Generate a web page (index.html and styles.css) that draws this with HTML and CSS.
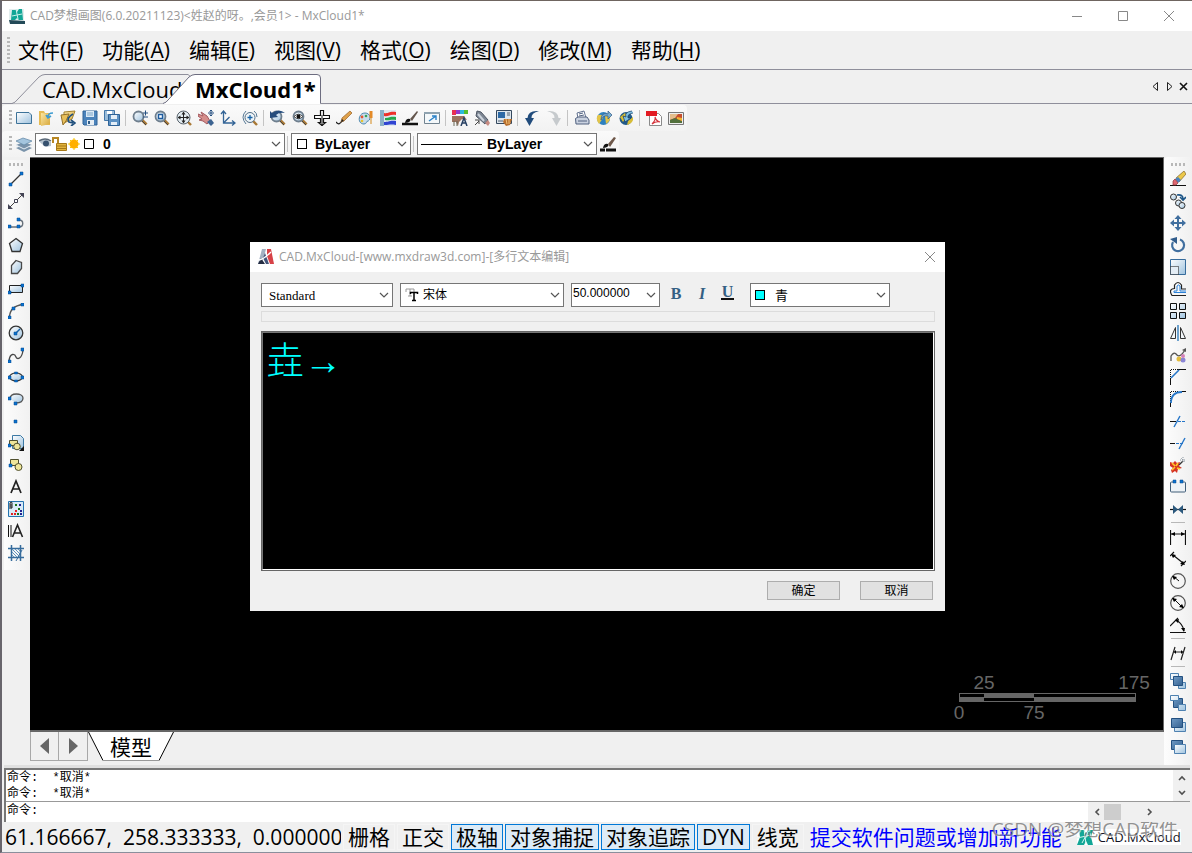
FILE: index.html
```html
<!DOCTYPE html>
<html lang="zh-CN">
<head>
<meta charset="utf-8">
<title>CAD梦想画图 - MxCloud1</title>
<link rel="stylesheet" href="styles.css">
</head>
<body>
<svg class="defs" aria-hidden="true">
  <defs>
    <linearGradient id="glass" x1="0" y1="0" x2="1" y2="1"><stop offset="0" stop-color="#fff"/><stop offset="1" stop-color="#9fc3df"/></linearGradient>
    <linearGradient id="steel" x1="0" y1="0" x2="1" y2="1"><stop offset="0" stop-color="#6f9bc6"/><stop offset="1" stop-color="#34608f"/></linearGradient>
    <linearGradient id="gold" x1="0" y1="0" x2="1" y2="1"><stop offset="0" stop-color="#fbe6a2"/><stop offset="1" stop-color="#d6a63a"/></linearGradient>
    <symbol id="lens" viewBox="0 0 16 16"><path d="M10 10l4.500 4.500" stroke="#a87834" stroke-width="2.800"/><path d="M10 11l4 4" stroke="#444"/><circle cx="6.500" cy="6.500" r="5" fill="url(#glass)" stroke="#6f7f8e" stroke-width="1.800"/></symbol>
    <symbol id="mx" viewBox="0 0 16 16"><path d="M2 1h5l2 4 2-4h5l-2 7 2 8h-5l-2-4-2 4H0l3-8z" fill="#12a696"/><path d="M7 0l2 15M0 9l14-3M12 1L5 14" stroke="#d6f6f2"/></symbol>
    <symbol id="chev" viewBox="0 0 10 6"><path d="M1 1l4 4 4-4" fill="none" stroke="#555" stroke-width="1.200"/></symbol>
  </defs>
</svg>

<header class="titlebar">
  <svg class="app-logo" viewBox="0 0 16 16"><path d="M0 1h15v13H0z" fill="#e3eeee"/><path d="M0 12l16 1v3H1z" fill="#244a58"/><path d="M3 2h4l1 2 2-3h3l1 11h-4L8 10l-2 2H2z" fill="#12a696"/><path d="M7 1l2 10M3 8l10-2" stroke="#c9f0ea"/></svg>
  <h1 class="title">CAD梦想画图(6.0.20211123)&lt;姓赵的呀。,会员1&gt; - MxCloud1*</h1>
  <div class="window-controls">
    <button aria-label="最小化"><svg viewBox="0 0 12 12"><path d="M1 6.500h10"/></svg></button>
    <button aria-label="最大化"><svg viewBox="0 0 12 12"><path d="M1.500 1.500h9v9h-9z"/></svg></button>
    <button aria-label="关闭"><svg viewBox="0 0 12 12"><path d="M1 1l10 10M11 1L1 11"/></svg></button>
  </div>
</header>

<nav class="menubar">
  <span class="grip grip-tall"></span>
  <button>文件(<u>F</u>)</button>
  <button>功能(<u>A</u>)</button>
  <button>编辑(<u>E</u>)</button>
  <button>视图(<u>V</u>)</button>
  <button>格式(<u>O</u>)</button>
  <button>绘图(<u>D</u>)</button>
  <button>修改(<u>M</u>)</button>
  <button>帮助(<u>H</u>)</button>
</nav>

<div class="doc-tabs">
  <button class="doc-tab tab-back"><svg class="tab-shape" viewBox="0 0 180 30" preserveAspectRatio="none"><path d="M0 29.500Q3 29 6 25L27 3Q30 .500 33 .500H176L180 4V29.500" fill="#f0f0f0" stroke="#8f8f9b"/></svg><span>CAD.MxCloud</span></button>
  <button class="doc-tab tab-front"><svg class="tab-shape" viewBox="0 0 158 30" preserveAspectRatio="none"><path d="M0 29.500Q3 29 6 25L26 3Q29 .500 32 .500H154Q157.500 .500 157.500 4V30H0" fill="#fff"/><path d="M0 29.500Q3 29 6 25L26 3Q29 .500 32 .500H154Q157.500 .500 157.500 4V29.500" fill="none" stroke="#6d6d80"/></svg><span>MxCloud1*</span></button>
  <div class="tab-nav">
    <button aria-label="上一个"><svg viewBox="0 0 9 11"><path d="M6.500 1.500v8L2 5.500z" fill="none" stroke="#222"/></svg></button>
    <button aria-label="下一个"><svg viewBox="0 0 9 11"><path d="M2.500 1.500v8L7 5.500z" fill="none" stroke="#222"/></svg></button>
    <button aria-label="关闭标签"><svg viewBox="0 0 9 11"><path d="M1 2l7 7M8 2L1 9" stroke="#111" stroke-width="1.600"/></svg></button>
  </div>
</div>

<div class="toolbar">
  <span class="grip"></span>
  <button class="tool" title="新建"><svg viewBox="0 0 16 16"><path d="M.500 2.500H13L15.500 5v8.500H.500z" fill="url(#glass)" stroke="#3d7399"/></svg></button>
  <button class="tool" title="打开"><svg viewBox="0 0 16 16"><path d="M1 1h5l1 2h5v12H1z" fill="#e5bb53"/><path d="M3 3l9 1v10l-9 2z" fill="url(#gold)"/><path d="M15 3c-4 0-5 1-5 4M8 5l2 3 3-2" fill="none" stroke="#3d9bd0" stroke-width="1.600"/></svg></button>
  <button class="tool" title="打开云图"><svg viewBox="0 0 16 16"><path d="M4 2l11-1-3 8-8 4z" fill="url(#gold)" stroke="#a4822e"/><path d="M1 5l8-1-3 7-3 4z" fill="#e8bf59" stroke="#92702a"/><path d="M13 4Q6 8 9 12l4 1M11 10l4 3-4 3" fill="none" stroke="#21517e" stroke-width="1.700"/></svg></button>
  <button class="tool" title="保存"><svg viewBox="0 0 16 16"><path d="M1 1h14v14H2L1 14z" fill="#4b83bb" stroke="#2e6297"/><path d="M4 1h8v6H4z" fill="#dceaf5"/><path d="M5 3h6M5 5h6" stroke="#7ba5c9"/><path d="M5 10h7v5H5z" fill="#e5edf4"/><path d="M6 11h2v3H6z" fill="#335e88"/></svg></button>
  <button class="tool" title="另存为"><svg viewBox="0 0 16 16"><path d="M.500 .500h10v10h-10z" fill="#9bbdda" stroke="#4276a8"/><path d="M3 1h5v3H3z" fill="#fff"/><path d="M4.500 4.500h11v11h-11z" fill="#5c91c3" stroke="#2e6297"/><path d="M7 5h6v4H7zM7 12h6v3H7z" fill="#e4eef7"/></svg></button>
  <span class="sep"></span>
  <button class="tool" title="缩放"><svg viewBox="0 0 16 16"><use href="#lens"/><path d="M11 3h5M13.500 .500v5M11 7h5" stroke="#244f80"/></svg></button>
  <button class="tool" title="窗口缩放"><svg viewBox="0 0 16 16"><use href="#lens"/><path d="M4.500 4.500h4v4h-4z" fill="#fff" stroke="#1d5b9e" stroke-width="1.400"/></svg></button>
  <button class="tool" title="范围缩放"><svg viewBox="0 0 16 16"><path d="M11 11l4 4" stroke="#a87834" stroke-width="2.400"/><circle cx="7.500" cy="7.500" r="6.500" fill="#e4edf2" stroke="#59636c"/><path d="M3 7.500h9M7.500 3v9" stroke="#222"/><path d="M1.500 7.500l3-2v4zM13.500 7.500l-3-2v4zM7.500 1.500l-2 3h4zM7.500 13.500l-2-3h4z" fill="#222"/></svg></button>
  <button class="tool" title="平移"><svg viewBox="0 0 16 16"><path d="M0 4l5 2-2-4 6 4 3 5-3 3-4-3-4-1 3-1-4-3z" fill="#d58d8b" stroke="#a35b60"/><path d="M9 12l4-3 3 4-3 3z" fill="#3c6390"/><path d="M10 3h6M13 0v6" stroke="#244f80"/><path d="M11.500 1.500L13 0l1.500 1.500M11.500 4.500L13 6l1.500-1.500" fill="none" stroke="#244f80"/></svg></button>
  <button class="tool" title="坐标系"><svg viewBox="0 0 16 16"><path d="M3.500 1v12H15M3.500 13l6-6M1 4l2.500-3L6 4M12 10.500l3 2.500-3 2.500" fill="none" stroke="#336496" stroke-width="1.300"/></svg></button>
  <button class="tool" title="实时缩放"><svg viewBox="0 0 16 16"><path d="M11 11l4 4" stroke="#a87834" stroke-width="2.400"/><circle cx="8" cy="7.500" r="5" fill="#edf4f8" stroke="#516c84"/><path d="M5.500 7.500h5M8 5v5" stroke="#1763a8" stroke-width="1.300"/><path d="M4 1Q-2 7 4 14M12 1q3 2 3 6" fill="none" stroke="#557895"/></svg></button>
  <span class="sep"></span>
  <button class="tool" title="上一视图"><svg viewBox="0 0 16 16"><use href="#lens"/><path d="M0 8V1l2 2q7-5 13 0-6-1-9 2l2 2z" fill="#244c7d"/></svg></button>
  <button class="tool" title="查看"><svg viewBox="0 0 16 16"><use href="#lens"/><path d="M2 6.500Q6.500 2 11 6.500 6.500 11 2 6.500z" fill="#fff" stroke="#444"/><circle cx="6.500" cy="6.500" r="2" fill="#111"/></svg></button>
  <button class="tool" title="定位"><svg viewBox="0 0 16 16"><path d="M6.500 .500h3v5h6v3h-6v4h2L8 15.500l-3.500-3h2v-4h-6v-3h6z" fill="#fff" stroke="#111" stroke-width="1.200"/><path d="M8 5v11" stroke="#111"/></svg></button>
  <button class="tool" title="画笔"><svg viewBox="0 0 16 16"><path d="M0 12q3 4 6-1" fill="none" stroke="#222" stroke-width="1.300"/><path d="M5 12l1-4 8-7 2 2-8 8z" fill="#dfa14b" stroke="#986025" stroke-width=".700"/><path d="M5 12l1-3 2 2z" fill="#222"/></svg></button>
  <button class="tool" title="调色板"><svg viewBox="0 0 16 16"><path d="M7 3C0 3-1 14 6 14c3 0 2-3 4-3 3-1 3-8-3-8z" fill="#c8dceb" stroke="#4c88ae"/><circle cx="4" cy="7" r="1.400" fill="#e65533"/><circle cx="8" cy="6" r="1.300" fill="#35a458"/><circle cx="4" cy="11" r="1.300" fill="#e6c22e"/><path d="M13 1v7" stroke="#e48b28" stroke-width="3"/><path d="M13 8v6" stroke="#e0b26d" stroke-width="1.600"/></svg></button>
  <button class="tool" title="颜色"><svg viewBox="0 0 16 16"><path d="M0 0h16v16H0z" fill="#dfe8ef"/><path d="M16 2c-8-1-7 2-12 1v3c5 1 5-2 12-1z" fill="#ed302a"/><path d="M16 7c-7-1-7 1-11 1v2c5 1 5-1 11 0z" fill="#25a64b"/><path d="M16 11c-7-1-7 1-12 1v3c6 0 6-1 12 0z" fill="#3044d2"/><path d="M0 0h4v16H0z" fill="#8aafc8"/></svg></button>
  <button class="tool" title="线型刷"><svg viewBox="0 0 16 16"><path d="M0 14h16" stroke="#111" stroke-width="2.500"/><path d="M3 13q1-5 5-4 2 3-5 4" fill="#111"/><path d="M8 9l7-8 1 1-6 9z" fill="#64564d"/></svg></button>
  <button class="tool" title="全屏"><svg viewBox="0 0 16 16"><path d="M.500 2.500h15v11H.500z" fill="#f4f8fa" stroke="#718390"/><path d="M0 2h16v2H0z" fill="#8fa3b0"/><path d="M5 11l7-5M8 6h4v4" fill="none" stroke="#2c82c8" stroke-width="1.400"/></svg></button>
  <span class="sep"></span>
  <button class="tool" title="文字样式"><svg viewBox="0 0 16 16"><path d="M0 0h4v5H0z" fill="#e92d52"/><path d="M4 0h4v4H4z" fill="#9437cb"/><path d="M8 0h4v4H8z" fill="#2db8db"/><path d="M12 0h4v4h-4z" fill="#56bf2c"/><path d="M0 6h12l3 4-5-1-3 3-1 4-2-4H0z" fill="#9c725e"/><path d="M2 16v-5M5 16v-5" stroke="#665"/><path d="M9 16l3-8 3 8M10 13h4" fill="none" stroke="#263f62" stroke-width="1.500"/></svg></button>
  <button class="tool" title="特性匹配"><svg viewBox="0 0 16 16"><path d="M3 1l4 1 7 8-3 4-9-8z" fill="#7d8794" stroke="#4e5663"/><path d="M4 4l6 7" stroke="#ccd3dc" stroke-width="2"/><path d="M11 13l3-3 2 3-2 3z" fill="#c68a81"/><path d="M1 15l4-4M1 10h4v4" fill="none" stroke="#444"/></svg></button>
  <button class="tool" title="块编辑"><svg viewBox="0 0 16 16"><path d="M.500 .500h15v13H.500z" fill="#dde5ec" stroke="#34485e"/><path d="M2 2h7v6H2z" fill="#2d69a5"/><path d="M11 3h3M11 5h3M2 11h5" stroke="#536170"/><path d="M8 9h8l-2 6-4 1-3-4z" fill="#b8702f"/><path d="M10 9l1 5M13 9v5" stroke="#f1bf75"/></svg></button>
  <span class="sep"></span>
  <button class="tool" title="撤销"><svg viewBox="0 0 16 16"><path d="M15 1Q4 0 3.500 8H1l4.500 8L10 8H7.500Q7 3 15 1z" fill="#214c7c"/></svg></button>
  <button class="tool" title="重做"><svg viewBox="0 0 16 16"><path d="M1 1q11-1 11.500 7H15l-4.500 8L6 8h2.500Q9 3 1 1z" fill="#c6cacd"/></svg></button>
  <span class="sep"></span>
  <button class="tool" title="打印"><svg viewBox="0 0 16 16"><path d="M4 8L3 3l7-2 2 7" fill="#fff" stroke="#60708e"/><path d="M1.500 8.500L4 7h9l2 3v4H2z" fill="#c9d1df" stroke="#50617f"/><path d="M4 11h9M5 4l4-1M5 6l5-1" stroke="#50617f"/></svg></button>
  <button class="tool" title="网络图纸"><svg viewBox="0 0 16 16"><circle cx="7.500" cy="8.500" r="6.500" fill="#2d81c0"/><path d="M2 5q6-1 5 3l-4 6Q-1 9 2 5zM9 6l5 0q1 5-4 8z" fill="#e4c548"/><path d="M5 10Q5 2 12 4l0-3 4 4-4 4V6Q7 5 5 10" fill="#79add0" stroke="#315985" stroke-width=".700"/></svg></button>
  <button class="tool" title="网络更新"><svg viewBox="0 0 16 16"><circle cx="8" cy="8.500" r="6.500" fill="#225a88"/><path d="M2 7l5-4 2 3-4 6zM10 11l5-4q1 6-6 8z" fill="#d8bd36"/><path d="M14 1Q6 2 8 7L5 6l2 6 6-4-3 0Q9 4 15 3" fill="#7fc0e1" stroke="#153a64" stroke-width=".700"/></svg></button>
  <span class="sep"></span>
  <button class="tool" title="导出 PDF"><svg viewBox="0 0 16 16"><path d="M3.500 3.500h9l3 3v9h-12z" fill="#fff" stroke="#8a8a8a"/><path d="M0 1h11v5H0z" fill="#e31b23"/><path d="M6 14q4-4 3-7 1 4 5 5-4-1-8 2" fill="none" stroke="#d4333b" stroke-width="1.200"/></svg></button>
  <button class="tool" title="导出图片"><svg viewBox="0 0 16 16"><path d="M.500 2.500h15v12H.500z" fill="#eee" stroke="#777"/><path d="M2 4h12v9H2z" fill="#c64f2f"/><path d="M2 4h8l-3 4-5 2z" fill="#e4bd8b"/><path d="M2 10l5-2 7 3v2H2z" fill="#52703c"/><path d="M9 7l5 1v3l-5-2z" fill="#f2b531"/></svg></button>
</div>

<div class="toolbar">
  <span class="grip"></span>
  <button class="tool" title="图层管理"><svg viewBox="0 0 16 16"><path d="M0 12l8-3 8 3-8 4zM0 9l8-3 8 3-8 4z" fill="#7a93aa"/><path d="M0 9l8 4 8-4" fill="none" stroke="#e6eef4"/><path d="M0 5l7-3 9 3-8 4z" fill="#a4c5de" stroke="#5f84a3" stroke-width=".700"/></svg></button>
  <label class="combo combo-layer">
    <svg class="layer-state" viewBox="0 0 58 16">
      <path d="M0 5q6-4 12 1v4Q5 12 0 5z" fill="#b6c3ce"/><circle cx="7" cy="7.500" r="3" fill="#36516e"/><path d="M0 5q6-4 12 0" fill="none" stroke="#596877" stroke-width="1.500"/>
      <path d="M14 7V2h5v5" fill="none" stroke="#b78724" stroke-width="2"/><path d="M17.500 7.500h10v7h-10z" fill="#e2b43d" stroke="#a77918"/><path d="M18 10h10M18 12.500h10" stroke="#a77918"/>
      <path d="M35 2v12M29 8h12M31 4l8 8M39 4l-8 8" stroke="#f4d000"/><circle cx="35" cy="8" r="4.500" fill="#ffb000"/>
      <path d="M45.500 3.500h9v9h-9z" fill="#fff" stroke="#000"/>
    </svg>
    <select aria-label="图层"><option>0</option></select>
    <svg class="chev"><use href="#chev"/></svg>
  </label>
  <span class="sep"></span>
  <label class="combo combo-color">
    <span class="swatch"></span>
    <select aria-label="颜色"><option>ByLayer</option></select>
    <svg class="chev"><use href="#chev"/></svg>
  </label>
  <span class="sep"></span>
  <label class="combo combo-line">
    <span class="line-sample"></span>
    <select aria-label="线型"><option>ByLayer</option></select>
    <svg class="chev"><use href="#chev"/></svg>
  </label>
  <button class="tool" title="线型管理"><svg viewBox="0 0 16 16"><path d="M0 14h5M6 14h10" stroke="#111" stroke-width="3"/><path d="M3 12q1-5 5-4 2 3-5 4" fill="#111"/><path d="M8 8l6-7 2 1-6 9z" fill="#6d5749"/></svg></button>
</div>

<main class="workspace">
  <aside class="side side-left">
    <span class="grip-row"></span>
    <button class="tool" title="直线"><svg viewBox="0 0 16 16"><path d="M2 14L14 2" stroke="#333" stroke-width="1.300"/><path class="node" d="M1 12h3v3H1zM12 1h3v3h-3z"/></svg></button>
    <button class="tool" title="构造线"><svg viewBox="0 0 16 16"><path d="M1 15L15 1" stroke="#444"/><path d="M0 16v-5l5 5zM16 0v5l-5-5z" fill="#444455"/><path d="M6.500 6.500h3v3h-3z" fill="#fff" stroke="#445"/></svg></button>
    <button class="tool" title="多段线"><svg viewBox="0 0 16 16"><path d="M1 12h10c5 0 5-7 0-7" fill="none" stroke="#68717b" stroke-width="1.400"/><path class="node" d="M0 10h3v3H0zM9 10h3v3H9zM9 3h3v3H9z"/></svg></button>
    <button class="tool" title="正多边形"><svg viewBox="0 0 16 16"><path d="M8 1.500l6.500 5-2.500 8H4l-2.500-8z" fill="url(#glass)" stroke="#333" stroke-width="1.300"/></svg></button>
    <button class="tool" title="多边形"><svg viewBox="0 0 16 16"><path d="M8 1.500l5.500 2v6l-4 5h-6v-8z" fill="url(#glass)" stroke="#484848" stroke-width="1.300"/></svg></button>
    <button class="tool" title="矩形"><svg viewBox="0 0 16 16"><path d="M1.500 4.500h13v7h-13z" fill="url(#glass)" stroke="#222"/><path class="node" d="M0 10h3v3H0zM13 3h3v3h-3z"/></svg></button>
    <button class="tool" title="圆弧"><svg viewBox="0 0 16 16"><path d="M1.500 14Q2 3 15 1.500" fill="none" stroke="#555" stroke-width="1.300"/><path class="node" d="M0 13h3v3H0zM4 4h3v3H4zM13 0h3v3h-3z"/></svg></button>
    <button class="tool" title="圆"><svg viewBox="0 0 16 16"><circle cx="8" cy="8" r="6.800" fill="url(#glass)" stroke="#333" stroke-width="1.300"/><path d="M8 8l4-4" stroke="#1763a8" stroke-width="1.400"/><path class="node" d="M6 7h3v3H6z"/></svg></button>
    <button class="tool" title="样条曲线"><svg viewBox="0 0 16 16"><path d="M1 14C2 5 7 7 8 10s6 2 7-7" fill="none" stroke="#474747" stroke-width="1.300"/><path class="node" d="M0 13h3v3H0zM13 1h3v3h-3z"/></svg></button>
    <button class="tool" title="椭圆"><svg viewBox="0 0 16 16"><ellipse cx="8" cy="8" rx="6.500" ry="4" fill="url(#glass)" stroke="#333" stroke-width="1.200"/><path class="node" d="M0 7h3v3H0zM13 7h3v3h-3zM6.500 3h3v2h-3zM6.500 11h3v2h-3z"/></svg></button>
    <button class="tool" title="椭圆弧"><svg viewBox="0 0 16 16"><path d="M2 8C2 1 15 2 15 7q0 5-7 5" fill="url(#glass)" stroke="#555" stroke-width="1.300"/><path class="node" d="M0 6h3v3H0zM6 11h3v3H6z"/></svg></button>
    <button class="tool" title="点"><svg viewBox="0 0 16 16"><path class="node" d="M6 7h3v3H6z"/></svg></button>
    <button class="tool" title="插入块"><svg viewBox="0 0 16 16"><path d="M4.500 .500h8l3 3v10h-11z" fill="url(#glass)" stroke="#3c79a5"/><path d="M1.500 5.500h8v5h-8z" fill="#efe69a" stroke="#50502e"/><circle cx="9" cy="11.500" r="3.300" fill="#efe69a" stroke="#50502e"/><path d="M16 11v5h-5z" fill="#111"/><path class="node" d="M0 9h3v3H0z"/></svg></button>
    <button class="tool" title="创建块"><svg viewBox="0 0 16 16"><path d="M2.500 2.500h8v6h-8z" fill="#efe69a" stroke="#50502e"/><circle cx="10.500" cy="10" r="3.500" fill="#efe69a" stroke="#50502e"/><path class="node" d="M1 7h3v3H1z"/></svg></button>
    <button class="tool" title="文字"><svg viewBox="0 0 16 16"><path d="M3 14L8 2l5 12M5 10h6" fill="none" stroke="#222" stroke-width="1.700"/></svg></button>
    <button class="tool" title="填充"><svg viewBox="0 0 16 16"><path d="M.500 .500h15v15H.500z" fill="#d8eaf7" stroke="#2474b0"/><path d="M2 8V2q2-2 2 0v5q-1 1-1-1V3" fill="none" stroke="#222"/><path d="M3 12h2v2H3zM6 12h2v2H6zM7 9h2v2H7z" fill="#e12222"/><path d="M7 3h2v2H7zM10 7h2v2h-2zM9 12h2v2H9z" fill="#197519"/><path d="M11 3h2v2h-2zM12 9h2v2h-2zM12 12h2v2h-2z" fill="#20208f"/></svg></button>
    <button class="tool" title="多行文字"><svg viewBox="0 0 16 16"><path d="M.500 2v12M3 2v12" stroke="#111"/><path d="M4.500 14L9.500 2l5 12M6.500 10h6" fill="none" stroke="#222" stroke-width="1.600"/></svg></button>
    <button class="tool" title="图案填充"><svg viewBox="0 0 16 16"><path d="M3.500 0v16M12.500 0v16M0 3.500h16M0 12.500h16" stroke="#376c9c" stroke-width="1.500"/><path d="M4 4l8 8M4 7l5 5M7 4l5 5M4 10l2 2M10 4l2 2" stroke="#6093bd"/><path d="M14 5l-6 11" stroke="#376c9c"/></svg></button>
  </aside>

  <section class="center">
    <div class="canvas">
      <svg class="scale" viewBox="0 0 204 50" role="img" aria-label="比例尺">
        <g fill="#666"><path d="M5 21h177v9H5z"/><path d="M6 22h24v3H6zM30 26h50v3H30zM80 22h101v3H80z" fill="#000"/>
        <text x="30" y="17" text-anchor="middle">25</text><text x="180" y="17" text-anchor="middle">175</text><text x="5" y="47" text-anchor="middle">0</text><text x="80" y="47" text-anchor="middle">75</text></g>
      </svg>

      <section class="dialog" role="dialog" aria-label="多行文本编辑">
        <header class="dialog-head">
          <svg class="dialog-logo" viewBox="0 0 16 16"><path d="M4 0h4l-2 8-3 7H0z" fill="#a3b1c2"/><path d="M0 15l3-6 4 6z" fill="#252d43"/><path d="M9 0h4l3 15h-4L9 7z" fill="#d74248"/><path d="M7 4l4 11H8L5 9z" fill="#41547a"/><path d="M1 11Q6 10 13 3" fill="none" stroke="#fff" stroke-width="1.300"/></svg>
          <h2>CAD.MxCloud-[www.mxdraw3d.com]-[多行文本编辑]</h2>
          <button aria-label="关闭对话框"><svg viewBox="0 0 12 12"><path d="M1 1l10 10M11 1L1 11"/></svg></button>
        </header>
        <div class="dialog-body">
          <div class="format-row">
            <label class="combo format-combo style-combo"><select aria-label="文字样式"><option>Standard</option></select><svg class="chev"><use href="#chev"/></svg></label>
            <label class="combo format-combo font-combo">
              <svg class="tt" viewBox="0 0 14 14"><path d="M1 4V1h8v3M5 1v7M3 8h4" fill="none" stroke="#999"/><path d="M5.500 6V4.500h7V6M9 4v8.500M7 12.500h4" fill="none" stroke="#000" stroke-width="1.500"/></svg>
              <select aria-label="字体"><option>宋体</option></select><svg class="chev"><use href="#chev"/></svg>
            </label>
            <div class="combo format-combo size-combo"><input aria-label="文字高度" value="50.000000"><svg class="chev"><use href="#chev"/></svg></div>
            <div class="format-buttons"><button class="bold">B</button><button class="italic">I</button><button class="under">U</button></div>
            <label class="combo format-combo cyan-combo"><span class="swatch cyan"></span><select aria-label="文字颜色"><option>青</option></select><svg class="chev"><use href="#chev"/></svg></label>
          </div>
          <div class="ruler"></div>
          <textarea class="editor" aria-label="文本" spellcheck="false">垚→</textarea>
          <footer class="actions"><button>确定</button><button>取消</button></footer>
        </div>
      </section>
    </div>
    <div class="model-row">
      <button class="page" aria-label="上一布局"><svg viewBox="0 0 9 16"><path d="M9 0v16L0 8z"/></svg></button>
      <button class="page" aria-label="下一布局"><svg viewBox="0 0 9 16"><path d="M0 0v16l9-8z"/></svg></button>
      <button class="model-tab"><svg class="tab-shape" viewBox="0 0 86 29" preserveAspectRatio="none"><path d="M.500 0L15 28.500H71L85.500 0" fill="#fff"/><path d="M.500 0L15 28.500M71 28.500L85.500 0" stroke="#000"/><path d="M15 28.500h56" stroke="#999"/></svg><span>模型</span></button>
    </div>
  </section>

  <aside class="side side-right">
    <span class="grip-row"></span>
    <button class="tool" title="删除"><svg viewBox="0 0 16 16"><path d="M0 14.500h16" stroke="#111"/><path d="M6 7l8-7 2 3-7 8z" fill="#ecc84a" stroke="#80652a" stroke-width=".700"/><path d="M5 8l3-2 3 3-3 3z" fill="#4d83be"/><path d="M3 10l2-2 3 4-2 2H3z" fill="#dd6670" stroke="#8f343c" stroke-width=".700"/></svg></button>
    <button class="tool" title="复制"><svg viewBox="0 0 16 16"><circle cx="3.500" cy="4" r="3" fill="url(#glass)" stroke="#333"/><circle cx="8.500" cy="10" r="3" fill="url(#glass)" stroke="#333"/><circle cx="12" cy="12.500" r="3" fill="url(#glass)" stroke="#333"/><path d="M7 2q6-1 6 4M10 4l3 3 3-3" fill="none" stroke="#1d5688" stroke-width="1.600"/></svg></button>
    <button class="tool" title="移动"><svg viewBox="0 0 16 16"><path d="M8 0l3.500 4H9v3h3V4.500L16 8l-4 3.500V9H9v3h2.500L8 16l-3.500-4H7V9H4v2.500L0 8l4-3.500V7h3V4H4.500z" fill="#416f9f"/></svg></button>
    <button class="tool" title="旋转"><svg viewBox="0 0 16 16"><path d="M10 2.500A6 6 0 1 1 3 5" fill="none" stroke="#416f9f" stroke-width="2.200"/><path d="M0 2l7-2v7z" fill="#315d8c"/></svg></button>
    <button class="tool" title="缩放图形"><svg viewBox="0 0 16 16"><path d="M.500 .500h15v15H.500z" fill="url(#glass)" stroke="#376c9c"/><path d="M.500 7.500h8v8h-8z" fill="#e4edf5" stroke="#111" stroke-dasharray="1 1"/></svg></button>
    <button class="tool" title="偏移"><svg viewBox="0 0 16 16"><path d="M16 14.500H2Q-2 8 4.500 7.500V4q3.500-5 7 0v4H16" fill="none" stroke="#222" stroke-width="1.200"/><path d="M16 11.500H4V10h3V5q1.500-2 3 0v5h6" fill="none" stroke="#2c82d8"/></svg></button>
    <button class="tool" title="阵列"><svg viewBox="0 0 16 16"><path d="M.500 .500h6v6h-6zM9.500 .500h6v6h-6zM.500 9.500h6v6h-6zM9.500 9.500h6v6h-6z" fill="url(#glass)" stroke="#111"/></svg></button>
    <button class="tool" title="镜像"><svg viewBox="0 0 16 16"><path d="M5.500 2.500v11h-5zM10.500 2.500v11h5z" fill="#f3f7fa" stroke="#333"/><path d="M8 0v16" stroke="#2676b8" stroke-width="1.300"/></svg></button>
    <button class="tool" title="编辑曲线"><svg viewBox="0 0 16 16"><path d="M1 14V9q3-5 6-1 3 3 8-5" fill="none" stroke="#555" stroke-width="1.300"/><path d="M12 3l4-2v4z" fill="#555"/><circle cx="9" cy="12" r="2.500" fill="#e3bd3f"/><circle cx="13" cy="13" r="2.500" fill="#8b86d5"/><circle cx="13" cy="9" r="2" fill="#d482b8"/></svg></button>
    <button class="tool" title="倒角"><svg viewBox="0 0 16 16"><path d="M.500 10V.500H8" fill="none" stroke="#111" stroke-dasharray="1 1"/><path d="M.500 16V9M8 .500h8" stroke="#111"/><path d="M1 9l8-8" stroke="#2676c8" stroke-width="1.600"/></svg></button>
    <button class="tool" title="圆角"><svg viewBox="0 0 16 16"><path d="M.500 10V.500H8" fill="none" stroke="#111" stroke-dasharray="1 1"/><path d="M.500 16v-5M11 .500h5" stroke="#111"/><path d="M1 12Q1 1 12 1" fill="none" stroke="#2676c8" stroke-width="1.800"/></svg></button>
    <button class="tool" title="修剪"><svg viewBox="0 0 16 16"><path d="M0 8.500h6" stroke="#111"/><path d="M8 8.500h8" stroke="#2676c8" stroke-dasharray="3 1"/><path d="M4 14L10 3" stroke="#2676c8" stroke-width="1.400"/></svg></button>
    <button class="tool" title="延伸"><svg viewBox="0 0 16 16"><path d="M0 8.500h5" stroke="#111"/><path d="M6 8.500h7" stroke="#2676c8" stroke-dasharray="3 1"/><path d="M9 14L15 3" stroke="#2676c8" stroke-width="1.400"/></svg></button>
    <button class="tool" title="分解"><svg viewBox="0 0 16 16"><path d="M0 5l3 1 2-2 2 2 3-1-1 4 3 2-4 1-1 4-2-2-3 2-1-3 2-2-3-2z" fill="#d63322"/><path d="M2 6l3 3M8 6L6 9M2 13l3-3M7 11l3 1" stroke="#ffc928" stroke-width="1.600"/><path d="M9 8l4-4" stroke="#333" stroke-width="1.300"/><path d="M13 0v6M10 3h6M11 1l4 4" stroke="#8b97a1" stroke-dasharray="1 1"/></svg></button>
    <button class="tool" title="打断"><svg viewBox="0 0 16 16"><path d="M5 3H1.500Q.500 3 .500 4v8q0 1 1 1h13q1 0 1-1V4q0-1-1-1H11" fill="#edf2f6" stroke="#405e78"/><path class="node" d="M3 1h3v3H3zM10 1h3v3h-3z"/></svg></button>
    <button class="tool" title="合并"><svg viewBox="0 0 16 16"><path d="M0 8.500h16" stroke="#111" stroke-width="1.200"/><path d="M3 4l5 4.500L3 13zM13 4L8 8.500l5 4.500z" fill="#2b587c"/></svg></button>
    <span class="sep-row"></span>
    <button class="tool" title="线性标注"><svg viewBox="0 0 16 16"><path d="M.500 1v15M15.500 1v15M1 5h14" stroke="#111" stroke-width="1.200"/><path d="M1 5l4-2v4zM15 5l-4-2v4z"/></svg></button>
    <button class="tool" title="对齐标注"><svg viewBox="0 0 16 16"><path d="M0 5l4-4M11 15l5-5M3 4l10 8" stroke="#111" stroke-width="1.200"/><path d="M1 3l5 1-3 3zM15 14l-5-1 3-3z"/></svg></button>
    <button class="tool" title="半径标注"><svg viewBox="0 0 16 16"><circle cx="8" cy="8" r="7.300" fill="none" stroke="#555" stroke-width="1.200"/><path d="M3 3l6 5" stroke="#111"/><path d="M2 3l5 1-3 3z"/></svg></button>
    <button class="tool" title="直径标注"><svg viewBox="0 0 16 16"><circle cx="8" cy="8" r="7.300" fill="none" stroke="#555" stroke-width="1.200"/><path d="M3 3l10 10" stroke="#111"/><path d="M2 3l5 1-3 3zM14 13l-5-1 3-3z"/></svg></button>
    <button class="tool" title="角度标注"><svg viewBox="0 0 16 16"><path d="M0 15.500h16M0 9l8-8M6 3q7 4 8 11" fill="none" stroke="#111" stroke-width="1.200"/><path d="M5 3l4-1-1 4zM14 15l-3-4h4z"/></svg></button>
    <span class="sep-row"></span>
    <button class="tool" title="编辑标注"><svg viewBox="0 0 16 16"><path d="M1 15L5 2M11 15l4-13M4 7h9" stroke="#222" stroke-width="1.200"/><path d="M4 7l2-2v4zM13 7l-2-2v4z"/></svg></button>
    <span class="sep-row"></span>
    <button class="tool" title="前置"><svg viewBox="0 0 16 16"><path class="sheet" d="M.500 .500h8v6h-8zM8.500 9.500h7v6h-7z"/><path class="slab" d="M3.500 3.500h9v9h-9z"/></svg></button>
    <button class="tool" title="后置"><svg viewBox="0 0 16 16"><path class="slab" d="M3.500 3.500h9v9h-9z"/><path class="sheet" d="M.500 .500h8v5h-8zM8.500 9.500h7v6h-7z"/></svg></button>
    <button class="tool" title="置于对象之上"><svg viewBox="0 0 16 16"><path class="sheet" d="M4.500 5.500h11v9h-11z"/><path class="slab" d="M1.500 1.500h11v9h-11z"/></svg></button>
    <button class="tool" title="置于对象之下"><svg viewBox="0 0 16 16"><path class="slab" d="M1.500 1.500h11v9h-11z"/><path class="sheet" d="M4.500 5.500h11v9h-11z"/></svg></button>
  </aside>
</main>

<section class="command">
  <div class="log">
    <div class="log-lines"><p>命令:  *取消*</p><p>命令:  *取消*</p></div>
    <div class="vscroll">
      <button aria-label="向上滚动"><svg class="arrow" viewBox="0 0 8 6"><path d="M1 5l3-3 3 3"/></svg></button>
      <button aria-label="向下滚动"><svg class="arrow" viewBox="0 0 8 6"><path d="M1 1l3 3 3-3"/></svg></button>
    </div>
  </div>
  <div class="prompt">
    <label for="cmd">命令:</label><input id="cmd">
    <div class="hscroll">
      <button aria-label="向左滚动"><svg viewBox="0 0 6 8"><path d="M5 1L2 4l3 3"/></svg></button>
      <span class="thumb"></span>
      <button class="scroll-end" aria-label="向右滚动"><svg viewBox="0 0 6 8"><path d="M1 1l3 3-3 3"/></svg></button>
    </div>
  </div>
</section>

<footer class="status">
  <span class="coords">61.166667,  258.333333,  0.000000</span>
  <button>栅格</button>
  <button>正交</button>
  <button class="on">极轴</button>
  <button class="on">对象捕捉</button>
  <button class="on">对象追踪</button>
  <button class="on">DYN</button>
  <button>线宽</button>
  <a href="#feedback">提交软件问题或增加新功能</a>
  <span class="brand"><svg viewBox="0 0 16 16"><use href="#mx"/></svg>CAD.MxCloud</span>
  <span class="watermark">CSDN @梦想CAD软件</span>
</footer>
</body>
</html>
```
FILE: styles.css
```css
* { box-sizing: border-box; }
body {
  margin: 0;
  min-height: 100vh;
  display: flex;
  flex-direction: column;
  background: #f0f0f0;
  color: #000;
  border-top: 1px solid #6f6560;
  border-left: 2px solid #68656c;
  border-bottom: 1px solid #8a8f9c;
  font-family: "Open Sans", "Noto Sans CJK SC", sans-serif;
  font-size: 12px;
}
button, select, input, textarea { font: inherit; color: inherit; margin: 0; padding: 0; border: 0; background: none; border-radius: 0; }
select { appearance: none; outline: 0; }
h1, h2, p { margin: 0; font-weight: 400; }
svg { display: block; flex: none; }
.defs { position: absolute; width: 0; height: 0; }
.node { fill: #0a72cf; stroke: #064a8c; stroke-width: .5px; }
.sheet { fill: url(#glass); stroke: #4e81b0; }
.slab { fill: url(#steel); stroke: #235080; }

.titlebar { display: flex; align-items: center; height: 30px; background: #fff; color: #999; padding-left: 7px; }
.app-logo { width: 16px; height: 16px; margin-right: 5px; }
.title { font-size: 12px; line-height: 16px; flex: 1; white-space: nowrap; }
.window-controls { display: flex; }
.window-controls button { width: 46px; height: 30px; display: grid; place-items: center; }
.window-controls svg, .dialog-head button svg { width: 12px; height: 12px; fill: none; stroke: #888; }

.menubar { display: flex; align-items: center; gap: 19px; height: 38px; padding-left: 5px; font-size: 21px; line-height: 28px; white-space: nowrap; }
.menubar .grip { margin-right: -11px; }
.menubar u { text-decoration-thickness: 1px; text-underline-offset: 2px; }
.grip { width: 3px; height: 16px; flex: none; background: repeating-linear-gradient(#b8b8b8 0 2px, transparent 2px 4px); }
.grip-tall { height: 27px; }

.doc-tabs { display: flex; align-items: flex-end; height: 35px; border-top: 1px solid #8f8f9b; border-bottom: 1px solid #8f8f9b; padding-left: 10px; font-size: 22px; }
.doc-tab { position: relative; height: 30px; margin-bottom: -1px; text-align: left; line-height: 26px; white-space: nowrap; }
.tab-shape { position: absolute; inset: 0; width: 100%; height: 100%; }
.doc-tab span { position: relative; }
.tab-back { width: 180px; padding-left: 30px; }
.tab-front { width: 158px; margin-left: -29px; padding-left: 32px; font-weight: 700; }
.tab-nav { display: flex; gap: 5px; margin-left: auto; align-self: center; padding-right: 4px; }
.tab-nav svg { width: 9px; height: 11px; }

.toolbar { display: flex; align-items: center; height: 26px; padding-left: 7px; width: fit-content; border-radius: 4px; background: linear-gradient(#fafafa, #f2f2f2); }
.doc-tabs + .toolbar { margin-top: 1px; }
.toolbar .grip { margin-right: 1px; }
.tool { width: 22px; height: 22px; display: grid; place-items: center; flex: none; }
.tool svg { width: 16px; height: 16px; }
.sep { width: 1px; height: 16px; margin: 0 3px 0 2px; background: #c4c4c4; }
.combo { display: flex; align-items: center; height: 22px; border: 1px solid #767676; background: #fff; padding: 0 3px; }
.combo select, .combo input { flex: 1; min-width: 0; height: 100%; }
.toolbar .combo { font-family: "Liberation Sans", sans-serif; font-size: 14px; font-weight: 700; }
.toolbar .combo select { padding-left: 8px; }
.chev { width: 10px; height: 6px; }
.combo-layer { width: 250px; }
.toolbar .combo-layer select { padding-left: 6px; }
.layer-state { width: 58px; height: 16px; }
.combo-color { width: 120px; }
.swatch { width: 10px; height: 10px; border: 1px solid #000; margin-left: 2px; }
.combo-line { width: 180px; }
.line-sample { width: 61px; height: 1px; background: #000; }
.toolbar .combo-line select { padding-left: 5px; }

.workspace { flex: 1; display: flex; min-height: 0; }
.side { display: flex; flex-direction: column; flex: none; align-items: center; width: 28px; padding-top: 6px; }
.side-left { background: linear-gradient(to right, #fcfcfc, #f0f0f0) no-repeat 2px 3px / 100% 410px; }
.side-right { background: linear-gradient(to right, #fdfdfd, #f0f0f0); border-radius: 4px; }
.grip-row { width: 14px; height: 3px; margin-bottom: 2px; background: repeating-linear-gradient(to right, #b8b8b8 0 2px, transparent 2px 4px); }
.sep-row { width: 14px; height: 1px; margin: 2px 0 3px; background: #b8b8b8; }
.center { flex: 1; min-width: 0; display: flex; flex-direction: column; }
.canvas { position: relative; flex: 1; background: #000; border: 1px solid #666; border-width: 1px 1px 2px 0; }
.scale { position: absolute; right: 5px; bottom: 8px; width: 204px; height: 50px; overflow: visible; font-family: "Liberation Sans", sans-serif; font-size: 19px; }

.dialog { position: absolute; left: 220px; top: 84px; width: 695px; background: #f0f0f0; }
.dialog-head { display: flex; align-items: center; height: 30px; background: #fff; color: #999; padding: 0 9px 0 8px; }
.dialog-logo { width: 16px; height: 16px; margin-right: 5px; }
.dialog-head h2 { flex: 1; font-size: 12px; line-height: 16px; }
.dialog-body { padding: 11px 10px 11px 11px; }
.format-row { display: flex; align-items: flex-start; }
.format-combo { height: 24px; padding-left: 7px; font-family: "Liberation Serif", "Noto Sans CJK SC", serif; font-size: 13px; }
.style-combo { width: 132px; }
.font-combo { width: 164px; margin-left: 7px; padding-left: 4px; font-size: 12px; }
.font-combo select { padding-left: 4px; }
.tt { width: 14px; height: 14px; }
.size-combo { width: 89px; margin-left: 7px; padding-left: 1px; font-family: "Liberation Sans", sans-serif; font-size: 12px; }
.size-combo input { height: 18px; align-self: flex-start; }
.format-buttons { display: flex; gap: 4px; margin: 0 16px 0 5px; font-family: "Liberation Serif", serif; font-size: 16px; font-weight: 700; line-height: 20px; color: #345f83; }
.format-buttons button { width: 22px; height: 22px; }
.italic { font-style: italic; }
.format-buttons .under { height: 17px; line-height: 17px; border-bottom: 2px solid #111; width: 13px; margin-left: 4px; }
.cyan-combo { width: 140px; font-size: 13px; }
.cyan-combo select { padding-left: 10px; }
.cyan { background: #0ff; }
.swatch.cyan { margin-left: -3px; }
.ruler { height: 11px; margin: 4px 0 9px; border: 1px solid #dcdcdc; }
.editor { display: block; width: 100%; height: 240px; border: 2px solid; border-color: #777 #fff #fff #777; outline: 1px solid #666; outline-offset: -1px; background: #000; color: #0ff; font-family: "Liberation Sans", "Noto Sans CJK SC", sans-serif; font-size: 38px; font-weight: 300; line-height: 44px; padding: 6px 3px; resize: none; }
.actions { display: flex; justify-content: flex-end; gap: 20px; padding: 10px 2px 0 0; }
.actions button { width: 73px; height: 19px; border: 1px solid #adadad; background: #e1e1e1; line-height: 16px; }

.model-row { display: flex; height: 36px; }
.page { width: 29px; height: 29px; border: 1px solid #a8a8a8; border-top: 0; display: grid; place-items: center; }
.page + .page { border-left: 0; }
.page svg { width: 9px; height: 16px; fill: #666; }
.model-tab { position: relative; width: 86px; height: 29px; font-size: 21px; line-height: 28px; }
.model-tab span { position: relative; }

.command { display: flex; flex-direction: column; margin: 0 2px 0 2px; border-left: 2px solid #777; border-top: 2px solid #777; background: #fff; box-shadow: 0 -3px #e0e0e0; font-family: "Liberation Mono", "Noto Sans CJK SC", monospace; font-size: 12px; z-index: 1; }
.log { display: flex; justify-content: space-between; height: 32px; border-bottom: 1px solid #999; }
.log-lines { padding-left: 1px; line-height: 16px; white-space: pre; }
.log-lines p { height: 16px; }
.vscroll { display: flex; flex-direction: column; width: 17px; background: #f0f0f0; }
.vscroll button { flex: 1; display: grid; place-items: center; }
.vscroll svg { width: 8px; height: 6px; }
.vscroll svg, .hscroll svg { fill: none; stroke: #505050; stroke-width: 1.6px; }
.prompt { display: flex; align-items: flex-start; height: 20px; line-height: 18px; padding-left: 1px; }
.prompt input { flex: 1; height: 18px; }
.hscroll { display: flex; align-items: center; width: 102px; height: 20px; padding-left: 1px; background: #f0f0f0; }
.hscroll button { width: 15px; height: 17px; display: grid; place-items: center; }
.hscroll svg { width: 6px; height: 8px; }
.thumb { width: 17px; height: 16px; background: #cdcdcd; }
.hscroll .scroll-end { margin-left: 21px; }

.status { position: relative; display: flex; align-items: center; gap: 2px; height: 30px; padding-left: 3px; font-size: 21px; line-height: 26px; white-space: nowrap; }
.coords { width: 336px; overflow: hidden; white-space: pre; }
.status button { border: 1px solid #f5f5f5; height: 26px; line-height: 23px; width: 52px; }
.status .on { width: auto; padding: 0 4px; border-color: #0078d7; background: #dcebf7; }
.status a { color: #00f; text-decoration: none; margin-left: 4px; }
.brand { display: flex; align-items: center; gap: 5px; margin-left: 13px; font-size: 13px; background: #fff; line-height: 16px; color: #112; }
.brand svg { width: 16px; height: 16px; }
.watermark { position: absolute; right: 14px; top: -6px; font-size: 19px; color: #777c; text-shadow: 1px 1px #fff9; }
```
